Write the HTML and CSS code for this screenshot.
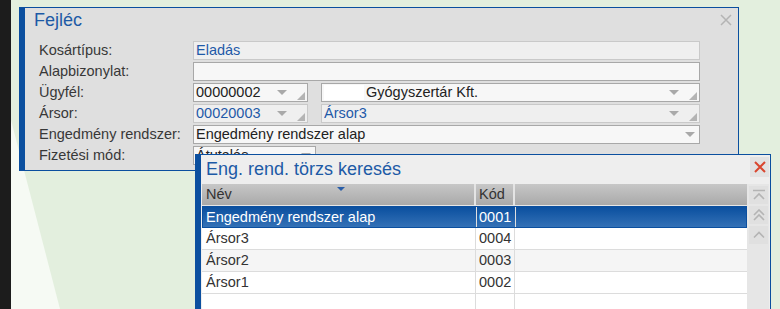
FILE: index.html
```html
<!DOCTYPE html>
<html>
<head>
<meta charset="utf-8">
<title>Fejléc</title>
<link rel="stylesheet" href="styles.css">
</head>
<body>
<div class="desk">
	<div class="strip"></div>
	<div class="canvas">
		<!-- fejléc panel -->
		<section class="panel">
			<div class="panel-head">
				<h1>Fejléc</h1>
				<svg class="panel-close" width="12" height="12" viewBox="0 0 12 12"><path d="M1 1L11 11M11 1L1 11" stroke="#b4b4b4" stroke-width="1.5"/></svg>
			</div>
			<div class="form">
				<div class="lbl">Kosártípus:</div>
				<div class="field ro blue">Eladás</div>

				<div class="lbl">Alapbizonylat:</div>
				<div class="field"></div>

				<div class="lbl">Ügyfél:</div>
				<div class="pair">
					<div class="field combo code">
						<span class="txt">00000002</span>
						<svg class="arr" width="10" height="5" viewBox="0 0 10 5"><path d="M0 0H10L5 5Z" fill="#a9a9a9"/></svg>
						<svg class="grip" width="8" height="8" viewBox="0 0 8 8"><path d="M8 0V8H0Z" fill="#b4b4b4"/></svg>
					</div>
					<div class="field combo name">
						<span class="txt"><span class="mask"></span>Gyógyszertár Kft.</span>
						<svg class="arr" width="10" height="5" viewBox="0 0 10 5"><path d="M0 0H10L5 5Z" fill="#a9a9a9"/></svg>
						<svg class="grip" width="8" height="8" viewBox="0 0 8 8"><path d="M8 0V8H0Z" fill="#b4b4b4"/></svg>
					</div>
				</div>

				<div class="lbl">Ársor:</div>
				<div class="pair">
					<div class="field ro blue combo code">
						<span class="txt">00020003</span>
						<svg class="arr" width="10" height="5" viewBox="0 0 10 5"><path d="M0 0H10L5 5Z" fill="#a9a9a9"/></svg>
						<svg class="grip" width="8" height="8" viewBox="0 0 8 8"><path d="M8 0V8H0Z" fill="#b4b4b4"/></svg>
					</div>
					<div class="field ro blue combo name">
						<span class="txt">Ársor3</span>
						<svg class="arr" width="10" height="5" viewBox="0 0 10 5"><path d="M0 0H10L5 5Z" fill="#a9a9a9"/></svg>
						<svg class="grip" width="8" height="8" viewBox="0 0 8 8"><path d="M8 0V8H0Z" fill="#b4b4b4"/></svg>
					</div>
				</div>

				<div class="lbl">Engedmény rendszer:</div>
				<div class="field combo">
					<span class="txt">Engedmény rendszer alap</span>
					<svg class="arr" width="10" height="5" viewBox="0 0 10 5"><path d="M0 0H10L5 5Z" fill="#a9a9a9"/></svg>
				</div>

				<div class="lbl">Fizetési mód:</div>
				<div class="field combo short">
					<span class="txt">Átutalás</span>
					<svg class="arr" width="10" height="5" viewBox="0 0 10 5"><path d="M0 0H10L5 5Z" fill="#a9a9a9"/></svg>
				</div>
			</div>
		</section>

		<!-- kereső ablak -->
		<section class="lookup">
			<div class="lookup-head">
				<h2>Eng. rend. törzs keresés</h2>
				<div class="lookup-close">
					<svg width="12" height="12" viewBox="0 0 12 12"><path d="M1 1L11 11M11 1L1 11" stroke="#d9462f" stroke-width="2"/></svg>
				</div>
			</div>
			<div class="lookup-body">
				<div class="grid">
					<div class="grow ghead">
						<div class="c c1">Név<svg class="sort" width="8" height="4" viewBox="0 0 8 4"><path d="M0 0H8L4 4Z" fill="#2a5ea8"/></svg></div>
						<div class="c c2">Kód</div>
						<div class="c c3"></div>
					</div>
					<div class="grow sel">
						<div class="c c1">Engedmény rendszer alap</div>
						<div class="c c2">0001</div>
						<div class="c c3"></div>
					</div>
					<div class="grow">
						<div class="c c1">Ársor3</div>
						<div class="c c2">0004</div>
						<div class="c c3"></div>
					</div>
					<div class="grow alt">
						<div class="c c1">Ársor2</div>
						<div class="c c2">0003</div>
						<div class="c c3"></div>
					</div>
					<div class="grow">
						<div class="c c1">Ársor1</div>
						<div class="c c2">0002</div>
						<div class="c c3"></div>
					</div>
					<div class="grow empty">
						<div class="c c1"></div>
						<div class="c c2"></div>
						<div class="c c3"></div>
					</div>
				</div>
				<div class="scroller">
					<div class="sbtn">
						<svg width="14" height="12" viewBox="0 0 14 12"><path d="M1 1.5H13M2 10L7 5L12 10" stroke="#b4b4b4" stroke-width="1.6" fill="none"/></svg>
					</div>
					<div class="sbtn">
						<svg width="14" height="12" viewBox="0 0 14 12"><path d="M2 6L7 1L12 6M2 11L7 6L12 11" stroke="#b4b4b4" stroke-width="1.6" fill="none"/></svg>
					</div>
					<div class="sbtn">
						<svg width="14" height="12" viewBox="0 0 14 12"><path d="M2 8.5L7 3.5L12 8.5" stroke="#b4b4b4" stroke-width="1.6" fill="none"/></svg>
					</div>
				</div>
			</div>
		</section>
	</div>
</div>
</body>
</html>
```

FILE: styles.css
```css
html, body {
	margin: 0;
	height: 309px;
	overflow: hidden;
	font-family: "Liberation Sans", Arial, sans-serif;
	font-size: 14.5px;
	color: #333;
}
.desk {
	display: flex;
	height: 309px;
}
.strip {
	width: 11px;
	background-color: #1c1c1c;
}
.canvas {
	flex: 1;
	position: relative;
	background-color: #e3efde;
	overflow: hidden;
}
.canvas::before {
	content: "";
	position: absolute;
	left: 0;
	top: 0;
	width: 60px;
	height: 309px;
	background-color: #f6faf4;
	clip-path: polygon(0 120px, 49px 309px, 0 309px);
}

/* panel */
.panel {
	position: relative;
	margin: 7px 0 0 8px;
	width: 720px;
	box-sizing: border-box;
	background-color: #dfdfdf;
	border: 1px solid #0b4f9f;
	border-left-width: 6px;
	padding: 0 38px 5px 14px;
}
.panel-head {
	display: flex;
	justify-content: space-between;
	height: 33px;
	margin-left: -5px;
	margin-right: -32px;
}
.panel-head h1 {
	margin: 0;
	font-size: 18px;
	font-weight: normal;
	line-height: 25px;
	color: #1d5aa6;
}
.panel-close {
	margin-top: 6px;
}
.form {
	display: grid;
	grid-template-columns: 154px 507px;
	grid-auto-rows: 19px;
	row-gap: 2px;
}
.lbl {
	line-height: 19px;
	color: #383838;
	white-space: nowrap;
}
.field {
	box-sizing: border-box;
	height: 19px;
	border: 1px solid #a8a8a8;
	background-color: #f7f7f7;
	padding: 0 2px;
	line-height: 17px;
	color: #222;
	white-space: nowrap;
	overflow: hidden;
}
.field.ro {
	background-color: #efefef;
	border-color: #c9c9c9;
}
.blue {
	color: #1f5aa8;
}
.pair {
	display: flex;
	gap: 13px;
}
.combo {
	display: flex;
	align-items: center;
	padding-right: 4px;
}
.combo .txt {
	flex: 1;
	overflow: hidden;
}
.combo .grip {
	align-self: flex-end;
	margin: 0 -2px 1px 10px;
}
.code {
	width: 115px;
}
.name {
	flex: 1;
}
.short {
	width: 123px;
}
.mask {
	display: inline-block;
	width: 40px;
	height: 15px;
	background-color: #fff;
	vertical-align: -3px;
	margin-right: 2px;
}

/* kereső ablak */
.lookup {
	position: absolute;
	left: 184px;
	top: 154px;
	width: 576px;
	height: 170px;
	box-sizing: border-box;
	background-color: #eeeeee;
	border: 1px solid #0b4f9f;
	border-left-width: 6px;
}
.lookup-head {
	display: flex;
	justify-content: space-between;
	height: 29px;
	padding-left: 5px;
}
.lookup-head h2 {
	margin: 0;
	font-size: 18px;
	font-weight: normal;
	line-height: 28px;
	color: #1d5aa6;
}
.lookup-close {
	display: flex;
	align-items: center;
	justify-content: center;
	width: 19px;
	height: 20px;
	margin: 2px 1px 0 0;
	background-color: #e2e2e2;
}
.lookup-body {
	display: flex;
	padding-left: 1px;
}
.grid {
	width: 545px;
}
.grow {
	display: flex;
	height: 22px;
	background-color: #fff;
	border-bottom: 1px solid #dcdcdc;
	box-sizing: border-box;
}
.c {
	box-sizing: border-box;
	line-height: 21px;
	padding-left: 4px;
	border-right: 1px solid #dcdcdc;
	white-space: nowrap;
}
.c1 {
	width: 274px;
	position: relative;
}
.c2 {
	width: 39px;
	padding-left: 3px;
}
.c3 {
	flex: 1;
	border-right: none;
}
.ghead {
	height: 22px;
	background: linear-gradient(#c7c7c7, #a9a9a9);
	border-bottom: 1px solid #e6e6e6;
}
.ghead .c {
	border-right: 2px solid #e4e4e4;
	color: #333;
}
.ghead .c3 {
	border-right: none;
}
.sort {
	position: absolute;
	left: 135px;
	top: 3px;
}
.sel {
	background: linear-gradient(#0a4f9f, #3471b6);
	border: 1px solid #0b4f9f;
	color: #fff;
}
.sel .c {
	border-right-color: #e0e0e0;
	line-height: 20px;
	padding-left: 3px;
}
.sel .c2 {
	padding-left: 2px;
}
.sel .c3 {
	border-right: none;
}
.alt {
	background-color: #f5f5f5;
}
.empty {
	height: 30px;
	border-bottom: none;
}
.scroller {
	width: 22px;
	background-color: #e6e6e6;
	padding-top: 2px;
	display: flex;
	flex-direction: column;
	gap: 2px;
	height: 140px;
}
.sbtn {
	width: 19px;
	height: 18px;
	margin-left: 2px;
	background-color: #e0e0e0;
	display: flex;
	align-items: center;
	justify-content: center;
}
```
